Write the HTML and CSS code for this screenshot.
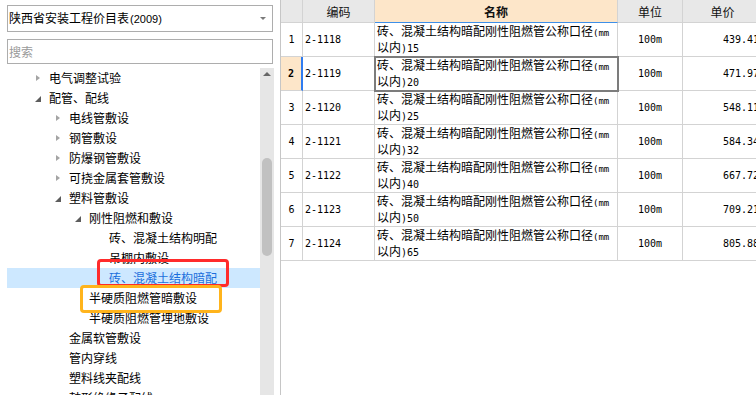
FILE: index.html
```html
<!DOCTYPE html>
<html lang="zh-CN">
<head>
<meta charset="utf-8">
<title>陕西省安装工程价目表</title>
<link rel="stylesheet" href="styles.css">
</head>
<body>
<aside class="left">
  <div class="combo"><span class="combo-text">陕西省安装工程价目表<span class="yr">(2009)</span></span><span class="combo-caret"></span></div>
  <input class="search" type="text" placeholder="搜索">
  <div class="tree-wrap">
    <ul class="tree">
      <li class="node l1"><span class="caret closed"></span>电气调整试验</li>
      <li class="node l1"><span class="caret open"></span>配管、配线</li>
      <li class="node l2"><span class="caret closed"></span>电线管敷设</li>
      <li class="node l2"><span class="caret closed"></span>钢管敷设</li>
      <li class="node l2"><span class="caret closed"></span>防爆钢管敷设</li>
      <li class="node l2"><span class="caret closed"></span>可挠金属套管敷设</li>
      <li class="node l2"><span class="caret open"></span>塑料管敷设</li>
      <li class="node l3"><span class="caret open"></span>刚性阻燃和敷设</li>
      <li class="node l4"><span class="caret"></span>砖、混凝土结构明配</li>
      <li class="node l4"><span class="caret"></span>吊棚内敷设</li>
      <li class="node l4 selected"><span class="caret"></span>砖、混凝土结构暗配</li>
      <li class="node l3"><span class="caret"></span>半硬质阻燃管暗敷设</li>
      <li class="node l3"><span class="caret"></span>半硬质阻燃管埋地敷设</li>
      <li class="node l2"><span class="caret"></span>金属软管敷设</li>
      <li class="node l2"><span class="caret"></span>管内穿线</li>
      <li class="node l2"><span class="caret"></span>塑料线夹配线</li>
      <li class="node l2"><span class="caret"></span>鼓形绝缘子配线</li>
    </ul>
    <div class="scrollbar">
      <span class="sb-up"></span>
      <span class="sb-thumb"></span>
    </div>
  </div>
</aside>
<main class="right">
  <table class="grid">
    <colgroup>
      <col class="c-num"><col class="c-code"><col class="c-name"><col class="c-unit"><col class="c-price">
    </colgroup>
    <thead>
      <tr><th class="num"></th><th>编码</th><th class="name-h">名称</th><th>单位</th><th>单价</th></tr>
    </thead>
    <tbody>
      <tr><td class="num">1</td><td class="code">2-1118</td><td class="name">砖、混凝土结构暗配刚性阻燃管公称口径<span class="mm">(mm</span><br>以内<span class="lat">)15</span></td><td class="unit">100m</td><td class="price">439.41</td></tr>
      <tr class="cur"><td class="num">2</td><td class="code">2-1119</td><td class="name focus">砖、混凝土结构暗配刚性阻燃管公称口径<span class="mm">(mm</span><br>以内<span class="lat">)20</span></td><td class="unit">100m</td><td class="price">471.97</td></tr>
      <tr><td class="num">3</td><td class="code">2-1120</td><td class="name">砖、混凝土结构暗配刚性阻燃管公称口径<span class="mm">(mm</span><br>以内<span class="lat">)25</span></td><td class="unit">100m</td><td class="price">548.11</td></tr>
      <tr><td class="num">4</td><td class="code">2-1121</td><td class="name">砖、混凝土结构暗配刚性阻燃管公称口径<span class="mm">(mm</span><br>以内<span class="lat">)32</span></td><td class="unit">100m</td><td class="price">584.34</td></tr>
      <tr><td class="num">5</td><td class="code">2-1122</td><td class="name">砖、混凝土结构暗配刚性阻燃管公称口径<span class="mm">(mm</span><br>以内<span class="lat">)40</span></td><td class="unit">100m</td><td class="price">667.72</td></tr>
      <tr><td class="num">6</td><td class="code">2-1123</td><td class="name">砖、混凝土结构暗配刚性阻燃管公称口径<span class="mm">(mm</span><br>以内<span class="lat">)50</span></td><td class="unit">100m</td><td class="price">709.21</td></tr>
      <tr><td class="num">7</td><td class="code">2-1124</td><td class="name">砖、混凝土结构暗配刚性阻燃管公称口径<span class="mm">(mm</span><br>以内<span class="lat">)65</span></td><td class="unit">100m</td><td class="price">805.88</td></tr>
    </tbody>
  </table>
</main>
<div class="mark mark-red"></div>
<div class="mark mark-orange"></div>
</body>
</html>
```

FILE: styles.css
```css
* { box-sizing: border-box; }
html, body { margin: 0; padding: 0; }
body {
  width: 756px;
  height: 395px;
  overflow: hidden;
  display: flex;
  position: relative;
  background: #fff;
  color: #000;
  font-family: "Noto Sans CJK SC", "Noto Sans", sans-serif;
  font-size: 12px;
}

/* ---------- left panel ---------- */
.left {
  width: 281px;
  flex: none;
  border-right: 1px solid #c6c6c6;
  display: flex;
  flex-direction: column;
  padding: 5px 0 0 7px;
}
.combo {
  width: 266px;
  height: 27px;
  border: 1px solid #adadad;
  display: flex;
  align-items: center;
  padding: 0 6px 0 1px;
}
.combo-text { flex: 1; line-height: 1; white-space: nowrap; }
.combo-text .yr { font-family: "Liberation Sans", sans-serif; font-size: 11px; margin-left: 1px; }
.combo-caret {
  width: 0; height: 0;
  border-left: 3px solid transparent;
  border-right: 3px solid transparent;
  border-top: 3px solid #7a7a7a;
}
.search {
  margin: 7px 0 0 0;
  width: 266px;
  height: 25px;
  border: 1px solid #adadad;
  padding: 0 1px;
  font: 12px "Noto Sans CJK SC", sans-serif;
  color: #000;
  outline: none;
  background: #fff;
}
.search::placeholder { color: #9a9a9a; }

.tree-wrap { margin-top: 4px; flex: 1; display: flex; min-height: 0; }
.tree { width: 253px; flex: none; list-style: none; margin: 0; padding: 0; }
.node { height: 20px; display: flex; align-items: center; white-space: nowrap; line-height: 1; }
.l1 { padding-left: 26px; }
.l2 { padding-left: 46px; }
.l3 { padding-left: 66px; }
.l4 { padding-left: 86px; }
.caret { width: 16px; flex: none; display: flex; align-items: center; height: 20px; }
.caret.closed::before {
  content: "";
  margin-left: 3px;
  border-left: 4px solid #a4a4a4;
  border-top: 3.5px solid transparent;
  border-bottom: 3.5px solid transparent;
}
.caret.open::before {
  content: "";
  margin-left: 2px;
  margin-top: 2px;
  border-bottom: 6px solid #5c5c5c;
  border-left: 6px solid transparent;
}
.node.selected { background: #cde8ff; color: #1b6fdc; }

.scrollbar {
  width: 14px;
  flex: none;
  background: #e6e6e6;
  display: flex;
  flex-direction: column;
  align-items: center;
  padding-top: 4px;
}
.sb-up {
  width: 0; height: 0;
  border-left: 4px solid transparent;
  border-right: 4px solid transparent;
  border-bottom: 4px solid #666;
}
.sb-thumb {
  margin-top: 82px;
  width: 10px;
  height: 98px;
  border-radius: 5px;
  background: #c1c1c1;
}

/* ---------- right panel ---------- */
.right { flex: 1; overflow: hidden; min-width: 0; }
.grid {
  border-collapse: separate;
  border-spacing: 0;
  table-layout: fixed;
  width: 482px;
}
.c-num { width: 22px; }
.c-code { width: 72px; }
.c-name { width: 243px; }
.c-unit { width: 65px; }
.c-price { width: 80px; }

.grid th, .grid td {
  border-right: 1px solid #d3d3d3;
  border-bottom: 1px solid #d3d3d3;
  padding: 0;
  overflow: hidden;
  white-space: nowrap;
}
.grid th {
  height: 23px;
  background: #e8e8e8;
  font-weight: normal;
  font-size: 12px;
  text-align: center;
  color: #111;
}
.grid th.name-h {
  background: #fde6c9;
  font-weight: bold;
  border-bottom-color: #3d8fe8;
}
.grid td { height: 33px; vertical-align: middle; }
.grid td.num, .grid td.code, .grid td.unit, .grid td.price, .lat, .mm {
  font-family: "DejaVu Sans Mono", "Liberation Mono", monospace;
}
.grid td.num { text-align: center; font-size: 10px; }
.grid td.code { font-size: 10px; padding-left: 2px; }
.grid td.unit { text-align: center; font-size: 10px; }
.grid td.price { text-align: right; font-size: 10px; padding-right: 3px; }
.grid td.name {
  vertical-align: top;
  padding: 1px 0 0 2px;
  line-height: 14px;
  font-size: 12px;
}
.lat { font-size: 10px; }
.mm { font-size: 9px; }
.cur td.num {
  background: #fde6c9;
  font-weight: bold;
  border-right: 2px solid #2f7cf0;
}
.grid td.focus { outline: 2px solid #7c7c7c; outline-offset: -1px; }

/* ---------- annotation marks ---------- */
.mark { position: absolute; border-radius: 4px; pointer-events: none; }
.mark-red { left: 97px; top: 259px; width: 132px; height: 28px; border: 3px solid #ff2b2b; }
.mark-orange { left: 80px; top: 285px; width: 142px; height: 28px; border: 3px solid #ffb41c; }
```
